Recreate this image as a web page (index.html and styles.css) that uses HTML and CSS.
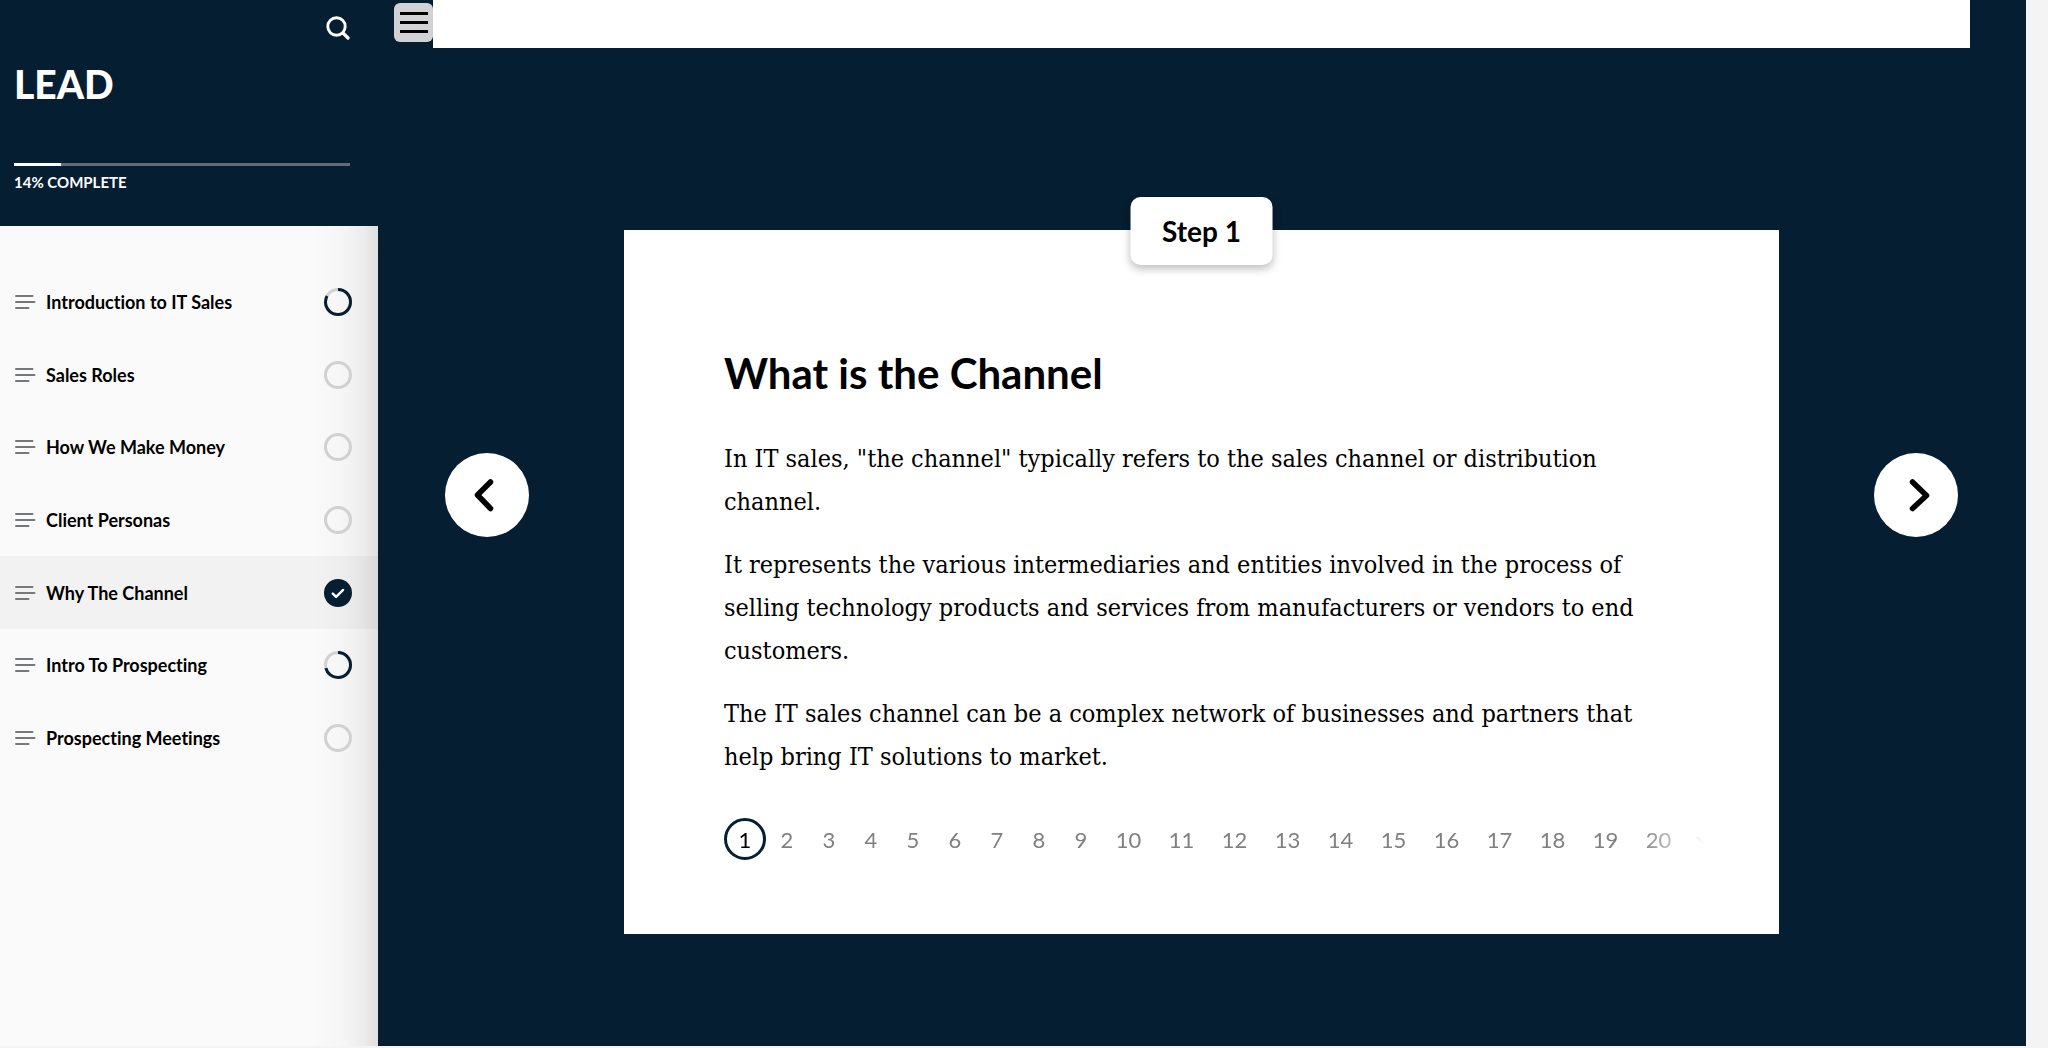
FILE: index.html
```html
<!DOCTYPE html>
<html lang="en">
<head>
<meta charset="utf-8">
<meta name="viewport" content="width=device-width, initial-scale=1">
<title>LEAD – Why The Channel</title>
<link rel="stylesheet" href="styles.css">
</head>
<body>
<svg class="sprite" aria-hidden="true">
  <symbol id="lines" viewBox="0 0 22 16"><path d="M2 2h16.500M2 8h18.500M2 14h12.500" fill="none" stroke="currentColor" stroke-width="2" stroke-linecap="round"/></symbol>
  <symbol id="ring" viewBox="0 0 28 28"><circle cx="14" cy="14" r="12.500" fill="none" stroke="#d1d1d2" stroke-width="3"/></symbol>
</svg>
<div class="app">
  <aside class="sidebar">
    <header class="course">
      <button class="search" type="button" aria-label="Search">
        <svg viewBox="0 0 24 24" width="24" height="24"><circle cx="10.500" cy="10.500" r="8.700" fill="none" stroke="#fff" stroke-width="2.900"/><path d="M17 17l5 5" stroke="#fff" stroke-width="3.200" stroke-linecap="round"/></svg>
      </button>
      <h1 class="course-title">LEAD</h1>
      <div class="progress"><div class="progress-fill" style="width:14%"></div></div>
      <p class="progress-label">14% COMPLETE</p>
    </header>
    <nav class="lessons" aria-label="Lessons">
      <a class="lesson" href="#"><svg class="lesson-icon"><use href="#lines"/></svg><span class="lesson-name">Introduction to IT Sales</span><svg class="status" viewBox="0 0 28 28"><use href="#ring"/><circle class="arc" cx="14" cy="14" r="12.500" pathLength="100" stroke-dasharray="83 100"/></svg></a>
      <a class="lesson" href="#"><svg class="lesson-icon"><use href="#lines"/></svg><span class="lesson-name">Sales Roles</span><svg class="status"><use href="#ring"/></svg></a>
      <a class="lesson" href="#"><svg class="lesson-icon"><use href="#lines"/></svg><span class="lesson-name">How We Make Money</span><svg class="status"><use href="#ring"/></svg></a>
      <a class="lesson" href="#"><svg class="lesson-icon"><use href="#lines"/></svg><span class="lesson-name">Client Personas</span><svg class="status"><use href="#ring"/></svg></a>
      <a class="lesson active" href="#" aria-current="page"><svg class="lesson-icon"><use href="#lines"/></svg><span class="lesson-name">Why The Channel</span><svg class="status" viewBox="0 0 28 28"><circle cx="14" cy="14" r="14" fill="#061e31"/><path d="M8.800 14.600l3.300 3.300 7-7" fill="none" stroke="#fff" stroke-width="2.400" stroke-linecap="round" stroke-linejoin="round"/></svg></a>
      <a class="lesson" href="#"><svg class="lesson-icon"><use href="#lines"/></svg><span class="lesson-name">Intro To Prospecting</span><svg class="status" viewBox="0 0 28 28"><use href="#ring"/><circle class="arc" cx="14" cy="14" r="12.500" pathLength="100" stroke-dasharray="71 100"/></svg></a>
      <a class="lesson" href="#"><svg class="lesson-icon"><use href="#lines"/></svg><span class="lesson-name">Prospecting Meetings</span><svg class="status"><use href="#ring"/></svg></a>
    </nav>
  </aside>
  <main class="content">
    <div class="topbar">
      <button class="menu" type="button" aria-label="Toggle menu"><span class="bar"></span><span class="bar"></span><span class="bar"></span></button>
      <div class="band"></div>
    </div>
    <section class="stage">
      <button class="arrow" type="button" aria-label="Previous step"><svg viewBox="0 0 84 84"><path d="M45.500 29L32.500 42L45.500 55.500" /></svg></button>
      <article class="card">
        <div class="step">Step 1</div>
        <h2 class="card-title">What is the Channel</h2>
        <div class="copy">
          <p>In IT sales, "the channel" typically refers to the sales channel or distribution channel.</p>
          <p>It represents the various intermediaries and entities involved in the process of selling technology products and services from manufacturers or vendors to end customers.</p>
          <p>The IT sales channel can be a complex network of businesses and partners that help bring IT solutions to market.</p>
        </div>
        <nav class="pager" aria-label="Steps">
          <button class="page current" type="button" aria-current="step">1</button><button class="page" type="button">2</button><button class="page" type="button">3</button><button class="page" type="button">4</button><button class="page" type="button">5</button><button class="page" type="button">6</button><button class="page" type="button">7</button><button class="page" type="button">8</button><button class="page" type="button">9</button><button class="page wide" type="button">10</button><button class="page wide" type="button">11</button><button class="page wide" type="button">12</button><button class="page wide" type="button">13</button><button class="page wide" type="button">14</button><button class="page wide" type="button">15</button><button class="page wide" type="button">16</button><button class="page wide" type="button">17</button><button class="page wide" type="button">18</button><button class="page wide" type="button">19</button><button class="page wide" type="button">20</button><button class="page" type="button" aria-label="Summary"><svg class="tick" viewBox="0 0 22 18"><path d="M2 7l7 7L20 3" fill="none" stroke="currentColor" stroke-width="3"/></svg></button>
        </nav>
      </article>
      <button class="arrow" type="button" aria-label="Next step"><svg viewBox="0 0 84 84"><path d="M38.500 29L52.500 42.500L38.500 55.500" /></svg></button>
    </section>
  </main>
</div>
</body>
</html>
```
FILE: styles.css
```css
* { box-sizing: border-box; }
body { margin: 0; background: #f4f4f4; font-family: Lato, sans-serif; font-variant-ligatures: none; color: #000; }
h1, h2, p { margin: 0; }
button { padding: 0; border: 0; background: none; font: inherit; color: inherit; cursor: pointer; }
svg { display: block; }
.sprite { position: absolute; width: 0; height: 0; }

.app { display: grid; grid-template-columns: 378px minmax(0, 1fr); min-height: 100vh; padding-right: 22px; padding-bottom: 2px; }

.sidebar { background: linear-gradient(to left, #dfdfdf, #ececec 14px, #f5f5f5 34px, #fafafa 64px); }
.course { display: flex; flex-direction: column; padding: 16px 28px 34px 14px; background: #061e31; color: #fff; }
.search { align-self: flex-end; width: 24px; height: 24px; }
.course-title { margin-top: 20px; font-size: 39px; line-height: 48px; font-weight: 900; }
.progress { height: 3px; margin-top: 55px; background: #626c76; }
.progress-fill { height: 3px; background: #fff; }
.progress-label { margin-top: 6px; font-size: 15px; line-height: 20px; font-weight: 700; }

.lessons { display: flex; flex-direction: column; height: 548px; padding-top: 40px; }
.lesson { flex: 1; display: flex; align-items: center; padding: 0 26px 0 14px; color: #000; text-decoration: none; }
.lesson.active { background: rgba(0, 0, 0, .03); }
.lesson-icon { width: 22px; height: 16px; margin-right: 10px; color: #77787a; }
.lesson-name { flex: 1; font-size: 18px; line-height: 24px; font-weight: 700; }
.status { width: 28px; height: 28px; }
.arc { fill: none; stroke: #061e31; stroke-width: 3; transform: rotate(-90deg); transform-origin: center; }

.content { background: #061e31; }
.topbar { display: flex; align-items: flex-start; padding: 0 56px 0 16px; }
.menu { display: flex; flex-direction: column; justify-content: center; align-items: center; gap: 6px; width: 39px; height: 39px; margin-top: 3px; border-radius: 6px; background: #d2d2d4; }
.bar { width: 28px; height: 3px; background: #000; }
.band { flex: 1; height: 48px; background: #fff; }

.stage { display: flex; align-items: flex-start; gap: 95px; padding: 182px 68px 110px 67px; }
.arrow { flex: none; width: 84px; height: 84px; margin-top: 223px; border-radius: 50%; background: #fff; }
.arrow path { fill: none; stroke: #000; stroke-width: 5.5px; stroke-linecap: round; stroke-linejoin: round; }
.card { position: relative; flex: 1; min-width: 0; padding: 115px 75px 74px 100px; background: #fff; }
.step { position: absolute; top: -33px; left: 50%; transform: translateX(-50%); padding: 16px 32px; border-radius: 10px; background: #fff; box-shadow: 0 4px 8px rgba(0, 0, 0, .25); font-size: 28px; line-height: 36px; font-weight: 700; white-space: nowrap; }
.card-title { font-size: 42px; line-height: 56px; font-weight: 700; }
.copy { display: grid; gap: 20px; margin-top: 36px; padding-right: 25px; font-family: "DejaVu Serif Condensed", "DejaVu Serif", serif; font-size: 25px; line-height: 43px; }
.pager { display: flex; overflow: hidden; margin-top: 40px; -webkit-mask-image: linear-gradient(to left, transparent, #000 64px); mask-image: linear-gradient(to left, transparent, #000 64px); }
.page { flex: none; display: flex; align-items: center; justify-content: center; width: 42px; height: 42px; font-size: 22px; color: #808080; }
.page.wide { width: 53px; }
.page.current { border: 3px solid #061e31; border-radius: 50%; color: #000; }
.tick { width: 22px; height: 18px; }
```
